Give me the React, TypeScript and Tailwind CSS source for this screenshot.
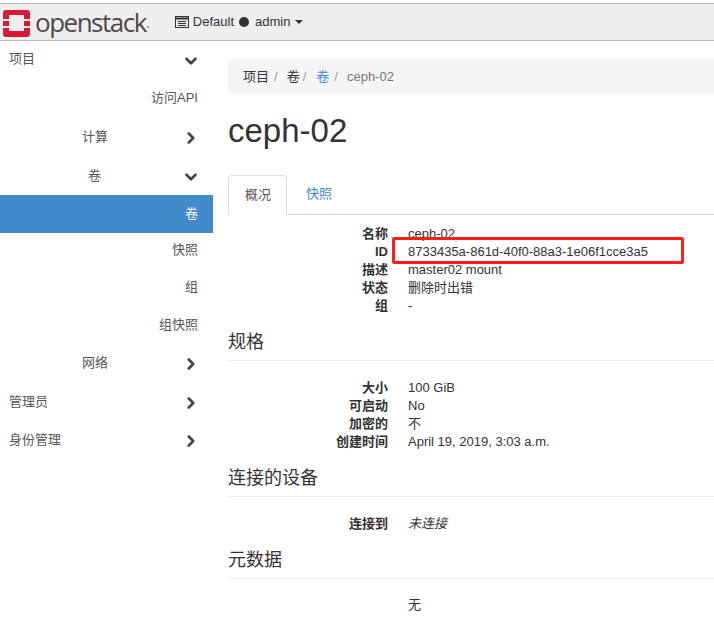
import React from 'react';
import { ChevronDown, ChevronRight } from 'lucide-react';

const font = "font-['Liberation_Sans','Noto_Sans_CJK_SC',sans-serif]";

type NavItem = { label: string; h: string; align: string; icon?: 'down' | 'right'; active?: boolean };

const nav: NavItem[] = [
  { label: '项目', h: 'h-[38px] pb-[2px]', align: 'pl-[9px]', icon: 'down' },
  { label: '访问API', h: 'h-[38px]', align: 'justify-end pr-[15px]' },
  { label: '计算', h: 'h-[39px]', align: 'justify-end pr-[105px]', icon: 'right' },
  { label: '卷', h: 'h-[39px]', align: 'justify-end pr-[112px]', icon: 'down' },
  { label: '卷', h: 'h-[38px]', align: 'justify-end pr-[15px]', active: true },
  { label: '快照', h: 'h-[35px] pb-[1px]', align: 'justify-end pr-[15px]' },
  { label: '组', h: 'h-[38px]', align: 'justify-end pr-[15px]' },
  { label: '组快照', h: 'h-[38px]', align: 'justify-end pr-[15px]' },
  { label: '网络', h: 'h-[38px]', align: 'justify-end pr-[105px]', icon: 'right' },
  { label: '管理员', h: 'h-[39px]', align: 'pl-[9px]', icon: 'right' },
  { label: '身份管理', h: 'h-[38px]', align: 'pl-[9px]', icon: 'right' },
];

function Sidebar() {
  return (
    <div className="w-[213px] shrink-0 text-[13px] text-[#555]">
      {nav.map((item, i) => (
        <div
          key={i}
          className={`relative flex items-center ${item.h} ${item.align} ${item.active ? 'bg-[#428bca] text-white' : ''}`}
        >
          {item.label}
          {item.icon === 'down' && (
            <ChevronDown className="absolute right-[13px] top-[calc(50%+1px)] -translate-y-1/2 text-[#444]" size={18} strokeWidth={3.5} />
          )}
          {item.icon === 'right' && (
            <ChevronRight className="absolute right-[13px] top-[calc(50%+1px)] -translate-y-1/2 text-[#444]" size={18} strokeWidth={3.5} />
          )}
        </div>
      ))}
    </div>
  );
}

function Row({ k, v, italic }: { k: string; v: string; italic?: boolean }) {
  return (
    <div className="flex h-[18px] items-center leading-[18px]">
      <div className="w-[160px] shrink-0 text-right font-bold">{k}</div>
      <div className={`ml-[20px] whitespace-nowrap ${italic ? 'italic' : ''}`}>{v}</div>
    </div>
  );
}

function SectionTitle({ children }: { children: React.ReactNode }) {
  return <div className="border-b border-[#eee] pb-[8px] text-[18px] leading-[20px] text-[#333]">{children}</div>;
}

export default function App() {
  return (
    <div className={`h-[632px] w-[714px] overflow-hidden bg-white text-[#333] ${font}`}>
      <div className="mt-[3px] flex h-[38px] items-center border-y border-[#bbb] bg-[#eee]">
        <svg className="ml-[3px] mt-[2px]" width="27" height="27" viewBox="0 0 27 27">
          <path
            d="M3 0H24Q27 0 27 3V9H21V5H6V9H0V3Q0 0 3 0ZM0 11H6V16H0ZM21 11H27V16H21ZM0 18H6V21H21V18H27V24Q27 27 24 27H3Q0 27 0 24Z"
            fill="#da1a32"
          />
        </svg>
        <span className="ml-[5px] font-['Open_Sans',sans-serif] text-[26px] font-medium leading-none tracking-[-1.5px] text-[#4d4a47]">
          openstack
        </span>
        <span className="ml-[1px] mt-[10px] h-[2px] w-[2px] rounded-full bg-[#8a8886]" />
        <svg className="ml-[26px]" width="14" height="12" viewBox="0 0 14 12" fill="none" stroke="#333">
          <rect x="0.5" y="0.5" width="13" height="11" />
          <path d="M0 2.5H14" strokeWidth="2" />
          <path d="M3 5.5H11M3 7.5H11M3 9.5H11" />
        </svg>
        <span className="ml-[4px] text-[13px]">Default</span>
        <span className="ml-[5px] h-[10px] w-[10px] rounded-full bg-[#333]" />
        <span className="ml-[6px] text-[13px]">admin</span>
        <span className="ml-[5px] h-0 w-0 border-x-[4px] border-t-[4px] border-x-transparent border-t-[#333]" />
      </div>
      <div className="flex">
        <Sidebar />
        <div className="ml-[15px] min-w-0 flex-1 text-[13px]">
          <div className="mt-[18px] flex h-[35px] items-center rounded-l-[4px] bg-[#f5f5f5] pl-[15px]">
            <span>项目</span>
            <span className="px-[5px] text-[#999]">/</span>
            <span className="ml-[4px]">卷</span>
            <span className="pl-[3px] pr-[5px] text-[#999]">/</span>
            <span className="ml-[5px] text-[#428bca]">卷</span>
            <span className="px-[5px] text-[#999]">/</span>
            <span className="ml-[4px] text-[#777]">ceph-02</span>
          </div>
          <h1 className="mt-[17px] text-[33px] leading-[40px]">ceph-02</h1>
          <div className="mt-[24px] flex h-[40px] border-b border-[#ddd]">
            <div className="h-[40px] rounded-t-[4px] border border-b-0 border-[#ddd] bg-white pl-[16px] pr-[15px] leading-[38px] text-[#555]">
              概况
            </div>
            <div className="pl-[19px] pr-[18px] leading-[38px] text-[#428bca]">快照</div>
          </div>
          <div className="mt-[10px]">
            <Row k="名称" v="ceph-02" />
            <div className="relative">
              <Row k="ID" v="8733435a-861d-40f0-88a3-1e06f1cce3a5" />
              <div className="absolute left-[164px] top-[-6px] h-[27px] w-[292px] rounded-[2px] border-[3px] border-[#f5211a]" />
            </div>
            <Row k="描述" v="master02 mount" />
            <Row k="状态" v="删除时出错" />
            <Row k="组" v="-" />
          </div>
          <div className="mt-[17px]">
            <SectionTitle>规格</SectionTitle>
          </div>
          <div className="mt-[18px]">
            <Row k="大小" v="100 GiB" />
            <Row k="可启动" v="No" />
            <Row k="加密的" v="不" />
            <Row k="创建时间" v="April 19, 2019, 3:03 a.m." />
          </div>
          <div className="mt-[17px]">
            <SectionTitle>连接的设备</SectionTitle>
          </div>
          <div className="mt-[18px]">
            <Row k="连接到" v="未连接" italic />
          </div>
          <div className="mt-[17px]">
            <SectionTitle>元数据</SectionTitle>
          </div>
          <div className="mt-[17px]">
            <Row k="" v="无" />
          </div>
        </div>
      </div>
    </div>
  );
}
